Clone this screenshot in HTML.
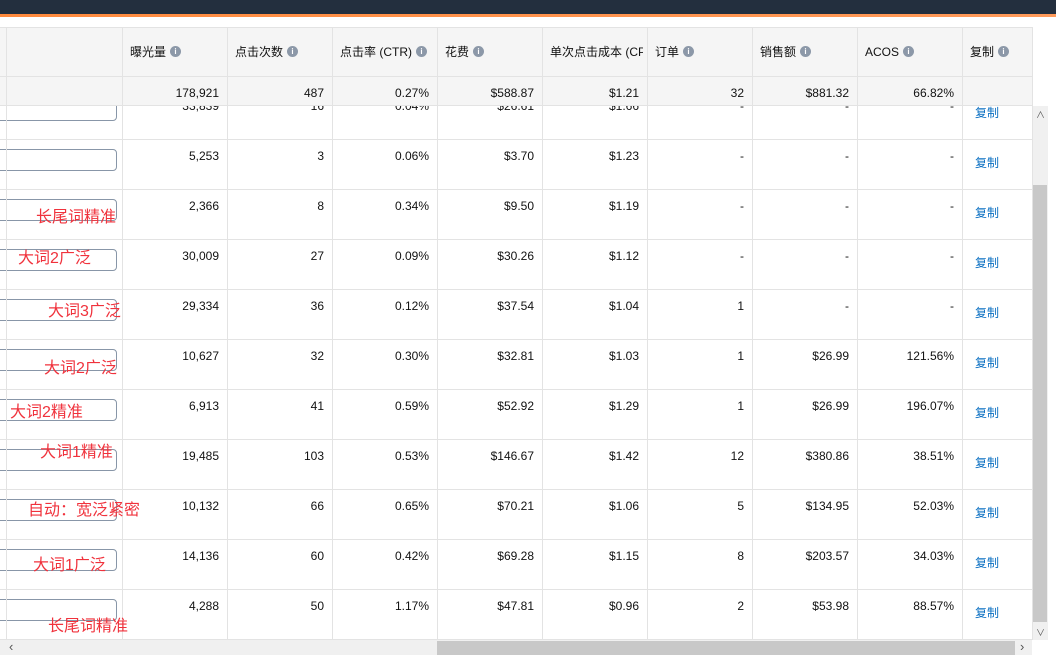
<!DOCTYPE html><html><head><meta charset="utf-8"><style>
*{margin:0;padding:0;box-sizing:border-box}
body{width:1056px;height:655px;overflow:hidden;background:#fff;font-family:"Liberation Sans","Noto Sans CJK SC",sans-serif;font-size:12px;color:#111;position:relative}
.a{position:absolute}
.top{left:0;top:0;width:1056px;height:14px;background:#232f3e}
.or{left:0;top:14px;width:1056px;height:3px;background:linear-gradient(90deg,#ff8a3d,#ff9a5a)}
.hd{left:0;top:27px;width:1032px;height:79px;background:#f5f5f5;border-top:1px solid #e3e3e3;border-bottom:1px solid #e3e3e3}
.vl{top:27px;width:1px;height:613px;background:#e3e3e3}
.hl{left:0;width:1032px;height:1px;background:#e3e3e3}
.h{top:44px;height:16px;line-height:16px;font-size:12px;color:#111;white-space:nowrap;overflow:hidden}
.i{display:inline-block;width:11px;height:11px;border-radius:50%;background:#8c98a8;color:#fff;font-size:8px;line-height:11px;text-align:center;font-weight:bold;vertical-align:middle;margin-left:4px;margin-top:-2px}
.n{width:95px;text-align:right;font-size:12px;line-height:16px}
.cp{color:#0a6fc2;font-size:12px}
.inp{left:-10px;width:127px;height:22px;border:1px solid #8896a8;border-radius:4px;background:#fff}
.r{color:#f0323c;font-size:16px;white-space:nowrap}
</style></head><body>
<div class="a top"></div><div class="a or"></div>
<div class="a hd"></div>
<div class="a hl" style="top:76px"></div>
<div class="a" style="left:0;top:106px;width:1032px;height:534px;overflow:hidden" id="b"></div>
<div class="a" style="left:1032px;top:106px;width:16px;height:534px;background:#f0f0f0"></div>
<div class="a" style="left:1033px;top:185px;width:14px;height:437px;background:#c8c8c8"></div>
<div class="a" style="left:1036px;top:626px;font-size:9px;color:#555">&#8744;</div>
<div class="a" style="left:1036px;top:108px;font-size:9px;color:#555">&#8743;</div>
<div class="a" style="left:0;top:640px;width:1032px;height:15px;background:#f0f0f0"></div>
<div class="a" style="left:437px;top:641px;width:578px;height:14px;background:#c8c8c8"></div>
<div class="a" style="left:9px;top:639px;font-size:13px;color:#555">&#8249;</div>
<div class="a" style="left:1020px;top:639px;font-size:13px;color:#555">&#8250;</div>
<script>
var cols=[6,122,227,332,437,542,647,752,857,962,1032];
var H=["曝光量","点击次数","点击率 (CTR)","花费","单次点击成本 (CPC)","订单","销售额","ACOS","复制"];
var S=["178,921","487","0.27%","$588.87","$1.21","32","$881.32","66.82%",""];
var R=[["33,839","16","0.04%","$26.61","$1.66","-","-","-"],["5,253","3","0.06%","$3.70","$1.23","-","-","-"],["2,366","8","0.34%","$9.50","$1.19","-","-","-"],["30,009","27","0.09%","$30.26","$1.12","-","-","-"],["29,334","36","0.12%","$37.54","$1.04","1","-","-"],["10,627","32","0.30%","$32.81","$1.03","1","$26.99","121.56%"],["6,913","41","0.59%","$52.92","$1.29","1","$26.99","196.07%"],["19,485","103","0.53%","$146.67","$1.42","12","$380.86","38.51%"],["10,132","66","0.65%","$70.21","$1.06","5","$134.95","52.03%"],["14,136","60","0.42%","$69.28","$1.15","8","$203.57","34.03%"],["4,288","50","1.17%","$47.81","$0.96","2","$53.98","88.57%"]];
var o="";
var b="";
for(var r=0;r<R.length;r++){var t=89+50*r-106;
 b+='<div class="a inp" style="top:'+(t+10)+'px"></div>';
 b+='<div class="a hl" style="top:'+(t+50)+'px"></div>';
 for(var c=0;c<8;c++){b+='<div class="a n" style="left:'+(cols[c+1]+105-8-95)+'px;top:'+(t+9)+'px">'+R[r][c]+'</div>';}
 b+='<div class="a cp" style="left:975px;top:'+(t+15)+'px">复制</div>';}
document.getElementById('b').innerHTML=b;
for(var c=0;c<cols.length;c++)o+='<div class="a vl" style="left:'+cols[c]+'px"></div>';
for(var c=0;c<9;c++){var w=cols[c+2]-cols[c+1]-12;o+='<div class="a h" style="left:'+(cols[c+1]+8)+'px;width:'+w+'px">'+H[c]+(c==4?'':'<span class="i">i</span>')+'</div>';
 o+='<div class="a n" style="left:'+(cols[c+1]+105-8-95)+'px;top:85px">'+S[c]+'</div>';}
var T=[["长尾词精准",36,203],["大词2广泛",18,244],["大词3广泛",48,297],["大词2广泛",44,354],["大词2精准",10,398],["大词1精准",40,438],["自动：宽泛紧密",28,496],["大词1广泛",33,551],["长尾词精准",48,612]];
for(var k=0;k<T.length;k++)o+='<div class="a r" style="left:'+T[k][1]+'px;top:'+T[k][2]+'px">'+T[k][0]+'</div>';
document.body.insertAdjacentHTML('beforeend',o);
</script>
</body></html>
